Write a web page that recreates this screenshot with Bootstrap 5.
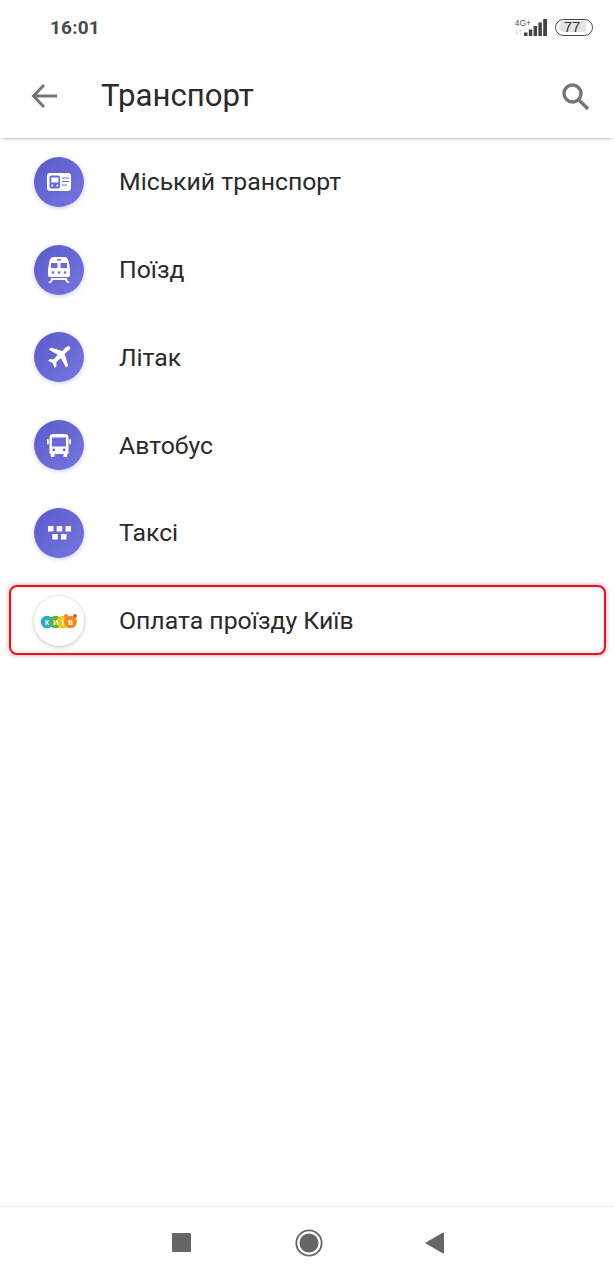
<!DOCTYPE html>
<html lang="uk">
<head>
<meta charset="utf-8">
<title>Транспорт</title>
<link href="https://cdn.jsdelivr.net/npm/bootstrap@5.3.0/dist/css/bootstrap.min.css" rel="stylesheet">
<style>
html,body{height:1280px;overflow:hidden}
body{font-family:Roboto,"Liberation Sans",sans-serif;background:#fff;color:#212121}
.phone-shell{height:1280px}
.status-strip{height:54px;padding:0 21px 0 50px;color:#4a4a4a}
.status-time{font-size:19px;font-weight:700;letter-spacing:.2px;line-height:1}
.batt-shell{width:38px;height:17px;border:1.7px solid #444;border-radius:9px;font-size:15px;line-height:1;font-family:"Liberation Sans",sans-serif;padding:1.5px}
.batt-fill{background:#e3e3e3;border-radius:6px 2px 2px 6px;width:27px;height:11px;line-height:11px;text-align:center;color:#333;margin-left:1px}
.net-label{font-size:8.5px;line-height:9px;color:#555;font-family:"Liberation Sans",sans-serif;margin-right:-7px;align-self:flex-start}
.net-arrows{color:#999;font-size:7.5px;line-height:8px}
.app-head{height:84px;padding:0 24px 0 30px;box-shadow:0 3px 3px -2px rgba(0,0,0,.25);position:relative;z-index:2}
.head-title{font-size:31.2px;line-height:1;font-weight:400;margin:0 0 0 43px;color:#2a2a2a}
.item-row{height:87.75px;padding:0 0 0 34px;border:0;gap:35px;font-size:24.8px;color:#2a2a2a;position:relative;background:transparent}
.round-ico{width:50px;height:50px;border-radius:50%;background:linear-gradient(135deg,#5a5acb,#7676de);box-shadow:0 1px 4px rgba(90,90,200,.35);flex:none}
.round-logo{background:#fff;box-shadow:0 1px 4px rgba(0,0,0,.25)}
.red-anchor{position:absolute;left:9px;right:8px;top:8px;bottom:10px;border:2px solid #f20d1f;border-radius:8px;box-shadow:0 0 5px rgba(0,0,0,.35),inset 0 0 5px rgba(0,0,0,.15);pointer-events:none}
.foot-bar{height:74px;border-top:1px solid #eee;padding-bottom:2px}
.foot-inner{width:272px;margin-left:172px}
.logo-txt{font:700 6.5px "Liberation Sans",sans-serif;fill:#fff}
</style>
</head>
<body>
<div class="phone-shell d-flex flex-column">
  <div class="status-strip d-flex align-items-center justify-content-between">
    <span class="status-time">16:01</span>
    <div class="d-flex align-items-center gap-2">
      <div class="d-flex align-items-end">
        <div class="net-label"><div>4G+</div><div class="net-arrows">↓↑</div></div>
        <svg width="23" height="17" viewBox="0 0 23 17" fill="#444"><rect x="0" y="13.500" width="3.500" height="3.500"/><rect x="4.800" y="10.500" width="3.500" height="6.500"/><rect x="9.600" y="7" width="3.500" height="10"/><rect x="14.400" y="3.500" width="3.500" height="13.500"/><rect x="19.200" y="0" width="3.800" height="17"/></svg>
      </div>
      <div class="batt-shell"><div class="batt-fill">77</div></div>
    </div>
  </div>

  <header class="app-head d-flex align-items-center">
    <svg width="28" height="28" viewBox="0 0 28 28" fill="none" stroke="#757575" stroke-width="3"><path d="M27 14H4M14 3 3.500 14 14 25"/></svg>
    <h1 class="head-title flex-grow-1">Транспорт</h1>
    <svg width="30" height="30" viewBox="0 0 30 30" fill="none" stroke="#757575" stroke-width="3.400"><circle cx="12.500" cy="12.500" r="8.500"/><path d="M18.500 18.500 28 28"/></svg>
  </header>

  <div class="list-group list-group-flush flex-grow-1">
    <div class="list-group-item item-row d-flex align-items-center">
      <span class="round-ico d-flex align-items-center justify-content-center">
        <svg width="24" height="18" viewBox="0 0 24 18"><rect width="24" height="18" rx="3" fill="#fff"/><rect x="2.500" y="2.500" width="10.500" height="13" rx="2" fill="#6a6ad8"/><rect x="4.300" y="4.500" width="7" height="5" fill="#fff"/><circle cx="5.300" cy="12.500" r="1" fill="#fff"/><circle cx="10.300" cy="12.500" r="1" fill="#fff"/><path d="M15 5h7M15 8.500h7M15 12h5" stroke="#6a6ad8" stroke-width="1.200"/></svg>
      </span>
      <span>Міський транспорт</span>
    </div>
    <div class="list-group-item item-row d-flex align-items-center">
      <span class="round-ico d-flex align-items-center justify-content-center">
        <svg width="22" height="26" viewBox="0 0 22 26"><path d="M6 0h10c2.500 0 4 1.500 4.500 4L22 12v6c0 1.500-1 2-2 2H2c-1 0-2-.5-2-2v-6L1.500 4C2 1.500 3.500 0 6 0Z" fill="#fff"/><rect x="3" y="6" width="6.500" height="5" fill="#6a6ad8"/><rect x="12.500" y="6" width="6.500" height="5" fill="#6a6ad8"/><rect x="9" y="2" width="4" height="1.500" fill="#6a6ad8"/><circle cx="5" cy="15.500" r="1.300" fill="#6a6ad8"/><circle cx="11" cy="15.500" r="1.300" fill="#6a6ad8"/><circle cx="17" cy="15.500" r="1.300" fill="#6a6ad8"/><path d="M1 26c2-1 3-3 3-4h14c0 1 1 3 3 4" fill="none" stroke="#fff" stroke-width="2"/></svg>
      </span>
      <span>Поїзд</span>
    </div>
    <div class="list-group-item item-row d-flex align-items-center">
      <span class="round-ico d-flex align-items-center justify-content-center">
        <svg width="23" height="22" viewBox="0 0 23 22" fill="#fff"><path d="M22 .8c-1-.9-3-.6-4.300.7l-3.600 3.600L3 1.500.8 3.500l9 5.500-4.300 4.500-3.500-.5L0 14.800l4.500 2.300L6.800 22l1.800-2-.4-3.600 4.500-4.300 5.400 9.400 2.100-2-3.500-11.400 3.700-3.700C21.700 3.700 23 1.800 22 .8Z"/></svg>
      </span>
      <span>Літак</span>
    </div>
    <div class="list-group-item item-row d-flex align-items-center">
      <span class="round-ico d-flex align-items-center justify-content-center">
        <svg width="24" height="23" viewBox="0 0 24 23"><path d="M6 0h12c2.500 0 3.500 1.500 3.500 3.500v15c0 1-.5 1.500-1.300 1.500v2c0 .6-.4 1-1 1h-1.700c-.6 0-1-.4-1-1v-2h-9v2c0 .6-.4 1-1 1H4.800c-.6 0-1-.4-1-1v-2c-.8 0-1.300-.5-1.300-1.500v-15C2.500 1.500 3.500 0 6 0Z" fill="#fff"/><rect x="5" y="3.500" width="14" height="9" fill="#6a6ad8"/><circle cx="6.800" cy="16" r="1.400" fill="#6a6ad8"/><circle cx="17.200" cy="16" r="1.400" fill="#6a6ad8"/><rect x="0" y="5" width="1.800" height="5.500" rx=".9" fill="#fff"/><rect x="22.200" y="5" width="1.800" height="5.500" rx=".9" fill="#fff"/></svg>
      </span>
      <span>Автобус</span>
    </div>
    <div class="list-group-item item-row d-flex align-items-center">
      <span class="round-ico d-flex align-items-center justify-content-center">
        <svg width="23" height="14" viewBox="0 0 23 14" fill="#fff"><rect x="0" y="0" width="5.500" height="5.500"/><rect x="8.700" y="0" width="5.500" height="5.500"/><rect x="17.500" y="0" width="5.500" height="5.500"/><rect x="4.300" y="8" width="5.500" height="5.500"/><rect x="13" y="8" width="5.500" height="5.500"/></svg>
      </span>
      <span>Таксі</span>
    </div>
    <div class="list-group-item item-row d-flex align-items-center">
      <span class="round-ico round-logo d-flex align-items-center justify-content-center">
        <svg width="38" height="16" viewBox="0 0 38 16"><circle cx="7" cy="9" r="6.300" fill="#2aa9c9"/><circle cx="15.500" cy="9" r="6.300" fill="#5cb535"/><circle cx="23" cy="9" r="6.300" fill="#f5c518"/><circle cx="30.500" cy="9" r="6.300" fill="#ec8a22"/><circle cx="26" cy="3" r="2" fill="#ec8a22"/><circle cx="35" cy="3" r="2" fill="#d9603a"/><text x="7" y="11.500" text-anchor="middle" class="logo-txt">К</text><text x="15.500" y="11.500" text-anchor="middle" class="logo-txt">И</text><text x="23" y="11.500" text-anchor="middle" class="logo-txt">Ї</text><text x="30.500" y="11.500" text-anchor="middle" class="logo-txt">В</text></svg>
      </span>
      <span>Оплата проїзду Київ</span>
      <div class="red-anchor"></div>
    </div>
  </div>

  <div class="foot-bar d-flex align-items-center">
    <div class="foot-inner d-flex align-items-center justify-content-between">
      <svg width="20" height="20" viewBox="0 0 20 20"><rect width="19" height="19" rx="1" fill="#666"/></svg>
      <svg width="28" height="28" viewBox="0 0 28 28"><circle cx="14" cy="14" r="12.700" fill="none" stroke="#666" stroke-width="1.800"/><circle cx="14" cy="14" r="9.500" fill="#666"/></svg>
      <svg width="19" height="22" viewBox="0 0 19 22"><path d="M0 11 18 .5c.5 0 1 .2 1 1v19c0 .8-.5 1-1 1Z" fill="#666"/></svg>
    </div>
  </div>
</div>
<script src="https://cdn.jsdelivr.net/npm/bootstrap@5.3.0/dist/js/bootstrap.bundle.min.js"></script>
</body>
</html>
